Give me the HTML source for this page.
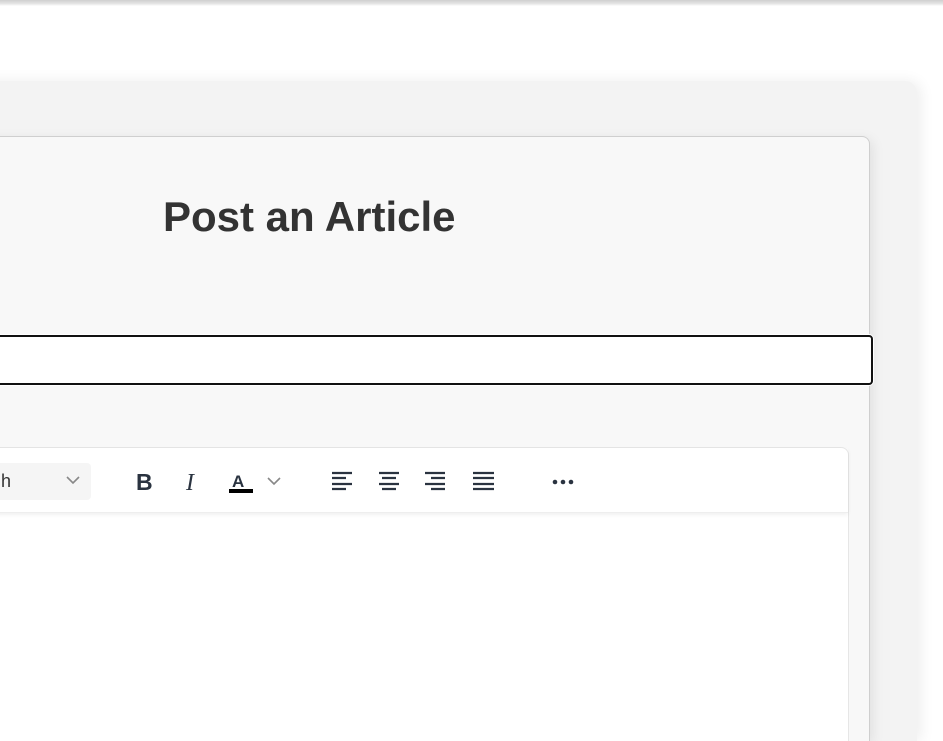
<!DOCTYPE html>
<html><head><style>
html,body{margin:0;padding:0;width:943px;height:741px;overflow:hidden;background:#fff;font-family:"Liberation Sans",sans-serif;position:relative;}
.topbar{position:absolute;left:0;top:0;width:943px;height:6px;background:linear-gradient(#cfcfcf,#e4e4e4 60%,#fff);}
.outer{position:absolute;left:-20px;top:81px;width:937px;height:660px;background:#f3f3f3;border-radius:12px 12px 0 0;box-shadow:4px 0 14px rgba(0,0,0,0.07);}
.card{position:absolute;left:-20px;top:136px;width:890px;height:605px;background:#f8f8f8;border:1px solid #cfcfcf;border-bottom:none;border-radius:8px 8px 0 0;box-shadow:3px 3px 12px rgba(0,0,0,0.08);box-sizing:border-box;}
h1{position:absolute;left:163px;top:190px;margin:0;font-size:42px;line-height:54px;font-weight:bold;color:#333;white-space:nowrap;}
.input{position:absolute;left:-20px;top:335px;width:889px;height:46px;background:#fff;border:2px solid #111;border-radius:4px;box-shadow:0 0 0 1px #fff;}
.editor{position:absolute;left:-20px;top:447px;width:869px;height:294px;background:#fff;border:1px solid #e6e6e6;border-bottom:none;border-radius:8px 8px 0 0;box-sizing:border-box;}
.tb{position:absolute;left:0;top:0;right:0;height:64px;box-shadow:0 2px 4px rgba(0,0,0,0.06);border-bottom:1px solid #eee;}
.sel{position:absolute;left:0;top:15px;width:110px;height:37px;background:#f5f5f5;border-radius:4px;font-size:18px;color:#333;}
.sel span{position:absolute;left:20px;top:8px;}
svg{position:absolute;}
</style></head><body>
<div class="topbar"></div>
<div class="outer"></div>
<div class="card"></div>
<h1>Post an Article</h1>
<div class="input"></div>
<div class="editor"><div class="tb">
<div class="sel"><span>h</span></div>
</div></div>
<svg width="943" height="741" style="left:0;top:0" viewBox="0 0 943 741">
<path d="M67 477 L73 483 L79 477" fill="none" stroke="#888" stroke-width="1.6"/>
<text x="136" y="490" font-family="Liberation Sans" font-weight="bold" font-size="23" fill="#2a3340">B</text>
<text x="186" y="490" font-family="Liberation Serif" font-style="italic" font-size="24" fill="#2a3340">I</text>
<text x="232" y="487" font-family="Liberation Sans" font-weight="bold" font-size="17" fill="#2a3340">A</text>
<rect x="229" y="489" width="24" height="4" fill="#000"/>
<path d="M268 478 L274 484 L280 478" fill="none" stroke="#888" stroke-width="1.6"/>
<g stroke="#2a3340" stroke-width="2.2">
<path d="M332 473h20M332 478h14M332 484h20M332 489h14"/>
<path d="M379 473h20M382 478h14M379 484h20M382 489h14"/>
<path d="M425 473h20M431 478h14M425 484h20M431 489h14"/>
<path d="M473 473h21M473 478h21M473 484h21M473 489h21"/>
</g>
<g fill="#2a3340"><circle cx="555" cy="482" r="2.3"/><circle cx="563" cy="482" r="2.3"/><circle cx="571" cy="482" r="2.3"/></g>
</svg>
</body></html>
